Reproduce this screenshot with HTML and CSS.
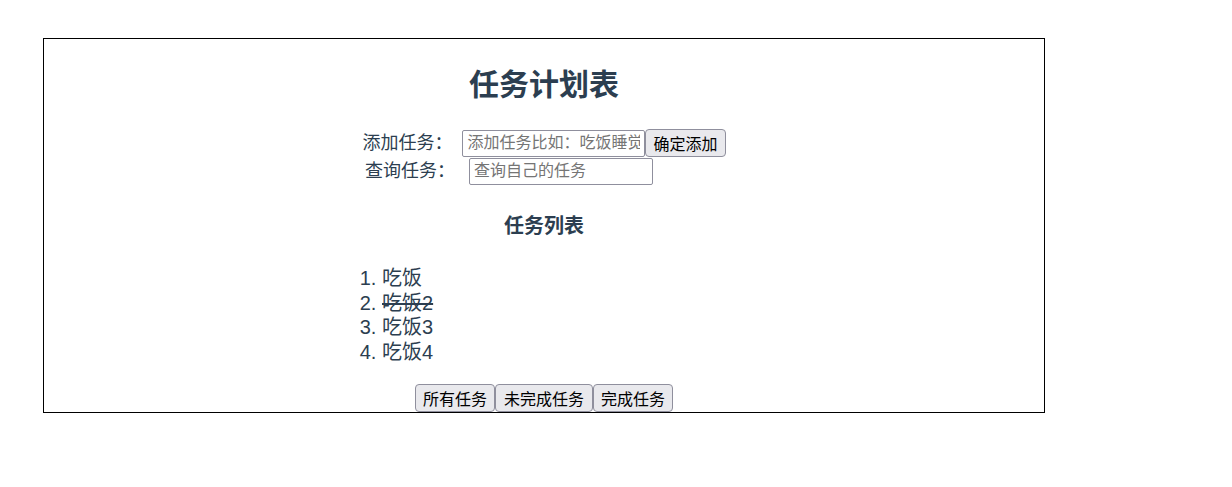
FILE: index.html
```html
<!DOCTYPE html>
<html lang="zh-CN">
<head>
<meta charset="utf-8">
<title>任务计划表</title>
<link rel="stylesheet" href="styles.css">
</head>
<body>
<div class="app">
  <h1 class="title">任务计划表</h1>
  <div class="row row-add">
    <span class="label label-add">添加任务：</span>
    <input class="field field-add" type="text" placeholder="添加任务比如：吃饭睡觉">
    <button class="btn" type="button">确定添加</button>
  </div>
  <div class="row row-search">
    <span class="label label-search">查询任务：</span>
    <input class="field field-search" type="text" placeholder="查询自己的任务">
  </div>
  <h3 class="subtitle">任务列表</h3>
  <ol class="tasks">
    <li><span>吃饭</span></li>
    <li><span class="done">吃饭2</span></li>
    <li><span>吃饭3</span></li>
    <li><span>吃饭4</span></li>
  </ol>
  <div class="filters">
    <button class="btn" type="button">所有任务</button>
    <button class="btn btn-wide" type="button">未完成任务</button>
    <button class="btn" type="button">完成任务</button>
  </div>
</div>
</body>
</html>
```
FILE: styles.css
```css
body {
  margin: 0;
  background: #ffffff;
  font-family: "Liberation Sans", "Noto Sans CJK SC", sans-serif;
}

.app {
  width: 1000px;
  margin: 38px 0 0 43px;
  border: 1px solid #000000;
  color: #2c3e50;
  text-align: center;
}

.title {
  margin: 28px 0 0;
  font-size: 30px;
  line-height: 36px;
  font-weight: bold;
}

.row {
  display: flex;
  justify-content: center;
  align-items: center;
  height: 28px;
}

.row-add {
  margin-top: 26px;
}

.row-search {
  padding-right: 70px;
}

.label {
  font-size: 18px;
  line-height: 28px;
  color: #2c3e50;
}

.label-add {
  margin-right: 10px;
}

.label-search {
  margin-right: 14px;
}

.field {
  box-sizing: border-box;
  height: 27px;
  font-family: "Liberation Sans", "Noto Sans CJK SC", sans-serif;
  font-size: 16px;
  padding: 1px 4px;
  margin: 0;
  border: 1px solid #8f8f9d;
  border-radius: 2px;
  background: #ffffff;
  color: #000000;
}

.field::placeholder {
  color: #757575;
}

.field-add {
  width: 183px;
}

.field-search {
  width: 184px;
}

.btn {
  box-sizing: border-box;
  height: 28px;
  margin: 0;
  padding: 0 7px;
  font-family: "Liberation Sans", "Noto Sans CJK SC", sans-serif;
  font-size: 16px;
  color: #000000;
  background: #e9e9ed;
  border: 1px solid #8f8f9d;
  border-radius: 4px;
}

.btn-wide {
  padding: 0 8px;
}

.subtitle {
  margin: 27px 0 0;
  font-size: 20px;
  line-height: 28px;
  font-weight: bold;
}

.tasks {
  margin: 26px 0 0 338px;
  padding: 0;
  text-align: left;
  font-size: 20px;
  line-height: 24.5px;
}

.done {
  text-decoration: line-through;
}

.filters {
  display: flex;
  justify-content: center;
  margin-top: 20px;
  height: 28px;
}
```
